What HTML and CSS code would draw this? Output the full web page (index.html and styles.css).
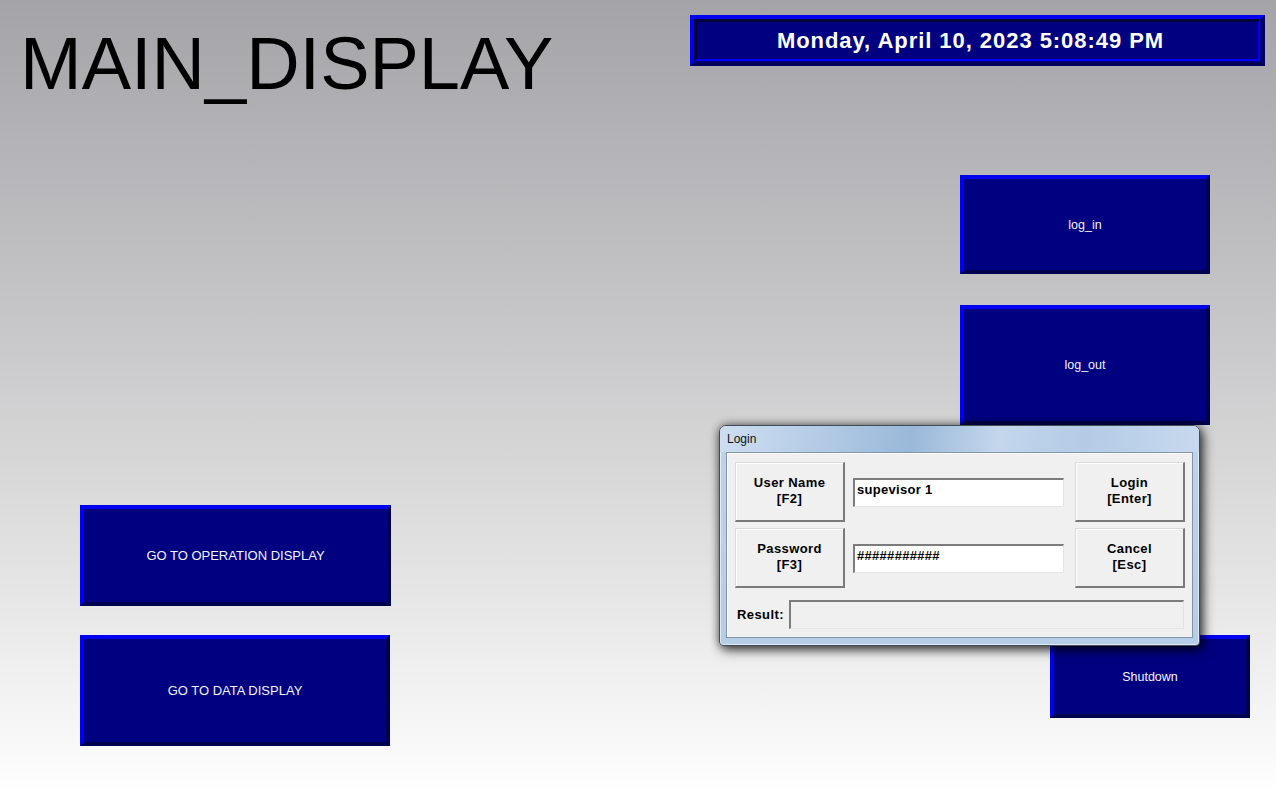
FILE: index.html
```html
<!DOCTYPE html>
<html lang="en">
<head>
<meta charset="utf-8">
<title>MAIN_DISPLAY</title>
<link rel="stylesheet" href="styles.css">
</head>
<body>
<div class="screen">
  <header class="header">
    <h1 class="title">MAIN_DISPLAY</h1>
    <div class="clock">
      <div class="clock-inner">Monday, April 10, 2023 5:08:49 PM</div>
    </div>
  </header>
  <main class="main">
    <div class="col-left">
      <div class="hmi-btn btn-op big-text">GO TO OPERATION DISPLAY</div>
      <div class="hmi-btn btn-data big-text">GO TO DATA DISPLAY</div>
    </div>
    <div class="col-right">
      <div class="hmi-btn btn-login">log_in</div>
      <div class="hmi-btn btn-logout">log_out</div>
      <div class="hmi-btn btn-shutdown">Shutdown</div>
    </div>
  </main>

  <div class="dialog">
    <div class="dialog-title">Login</div>
    <div class="dialog-client">
      <div class="dlg-row">
        <div class="dlg-btn">User Name<br>[F2]</div>
        <div class="dlg-input">supevisor 1</div>
        <div class="dlg-btn dlg-btn-right">Login<br>[Enter]</div>
      </div>
      <div class="dlg-row dlg-row-2">
        <div class="dlg-btn">Password<br>[F3]</div>
        <div class="dlg-input">###########</div>
        <div class="dlg-btn dlg-btn-right">Cancel<br>[Esc]</div>
      </div>
      <div class="dlg-result-row">
        <span class="dlg-label">Result:</span>
        <div class="dlg-result"></div>
      </div>
    </div>
  </div>
</div>
</body>
</html>
```

FILE: styles.css
```css
* { box-sizing: border-box; }

html, body {
  margin: 0;
  padding: 0;
}

body {
  width: 1276px;
  height: 792px;
  overflow: hidden;
  font-family: "Liberation Sans", Arial, sans-serif;
}

.screen {
  position: relative;
  width: 1276px;
  height: 792px;
  background: linear-gradient(to bottom, #a4a3a8 0%, #c6c6c8 40%, #e6e6e6 75%, #fefefe 100%);
}

/* ---------- header ---------- */
.header {
  display: flex;
  align-items: flex-start;
  height: 175px;
}

.title {
  margin: 27px 0 0 20px;
  font-size: 74px;
  line-height: 74px;
  font-weight: normal;
  color: #000;
  letter-spacing: 0;
}

.clock {
  margin: 15px 11px 0 auto;
  width: 575px;
  height: 51px;
  display: flex;
  padding: 0 1px 1px 0;
  background: #000080;
  border-style: solid;
  border-width: 4px;
  border-color: #0000f0 #00005a #00005a #0000f0;
}

.clock-inner {
  flex: 1;
  display: flex;
  align-items: center;
  justify-content: center;
  border-style: solid;
  border-width: 3px 2px 2px 3px;
  border-color: #00003c #0000ff #0000ff #00003c;
  color: #fff;
  font-weight: bold;
  font-size: 22px;
  letter-spacing: 0.95px;
  padding-right: 14px;
}

/* ---------- main area ---------- */
.main {
  display: flex;
  height: 571px;
}

.col-left {
  margin-left: 80px;
  width: 311px;
  display: flex;
  flex-direction: column;
  justify-content: flex-end;
  gap: 29px;
}

.col-right {
  margin-left: auto;
  margin-right: 26px;
  width: 290px;
  display: flex;
  flex-direction: column;
  align-items: flex-start;
}

.hmi-btn {
  display: flex;
  align-items: center;
  justify-content: center;
  background: #000080;
  border-style: solid;
  border-width: 4px;
  border-color: #0000f0 #000050 #000050 #0000f0;
  color: #f4f4ff;
  font-size: 12.5px;
}

.big-text { font-size: 13px; }

.btn-op { width: 311px; height: 101px; }
.btn-data { width: 310px; height: 111px; }

.btn-login { width: 250px; height: 99px; }
.btn-logout { width: 250px; height: 120px; margin-top: 31px; }
.btn-shutdown {
  width: 200px;
  height: 83px;
  margin-top: auto;
  margin-bottom: 28px;
  align-self: flex-end;
}

/* ---------- login dialog (overlay) ---------- */
.dialog {
  position: absolute;
  left: 719px;
  top: 425px;
  width: 481px;
  height: 221px;
  border: 1px solid #414c58;
  border-radius: 7px 7px 4px 4px;
  background: linear-gradient(to bottom, #bfd3ea, #b6cde7);
  box-shadow: inset 0 0 0 1px rgba(255,255,255,0.55), 3px 4px 12px rgba(0,0,0,0.7), 0 0 9px rgba(0,0,0,0.45);
  display: flex;
  flex-direction: column;
  z-index: 10;
}

.dialog-title {
  height: 26px;
  line-height: 26px;
  padding-left: 7px;
  font-size: 12px;
  color: #101010;
  border-radius: 6px 6px 0 0;
  background: linear-gradient(100deg, #cddef0 0%, #bdd2ea 14%, #a4c0de 32%, #9ab8d9 40%, #c3d6ec 58%, #b4cbe6 76%, #c7d9ee 100%);
}

.dialog-client {
  margin: 0 6px 7px 6px;
  height: 186px;
  border: 1px solid #8194aa;
  background: #f0f0f0;
  padding: 9px 7px 8px 8px;
  box-shadow: inset 1px 1px 0 #ffffff;
  font-weight: bold;
  font-size: 13px;
  letter-spacing: 0.4px;
  color: #000;
}

.dlg-row {
  display: flex;
  align-items: center;
  height: 60px;
}

.dlg-row-2 { margin-top: 6px; }

.dlg-btn {
  width: 110px;
  height: 60px;
  display: flex;
  align-items: center;
  justify-content: center;
  text-align: center;
  line-height: 16px;
  background: #f0f0f0;
  border-style: solid;
  border-width: 1px 2px 2px 1px;
  border-color: #dadada #7a7a7a #7a7a7a #dadada;
  box-shadow: inset 1px 1px 0 #ffffff;
  padding-bottom: 1px;
}

.dlg-btn-right { margin-left: 11px; }

.dlg-input {
  width: 211px;
  height: 29px;
  margin-left: 8px;
  background: #fff;
  border-style: solid;
  border-width: 2px 1px 1px 2px;
  border-color: #7c7c7c #e3e3e3 #e3e3e3 #7c7c7c;
  padding: 1px 2px;
  line-height: 18px;
  letter-spacing: 0.3px;
}

.dlg-result-row {
  display: flex;
  align-items: center;
  margin-top: 12px;
  height: 29px;
}

.dlg-label {
  margin-left: 2px;
}

.dlg-result {
  margin-left: auto;
  margin-right: 1px;
  width: 395px;
  height: 29px;
  background: #f0f0f0;
  border-style: solid;
  border-width: 2px 1px 1px 2px;
  border-color: #7c7c7c #e3e3e3 #e3e3e3 #7c7c7c;
}
```
